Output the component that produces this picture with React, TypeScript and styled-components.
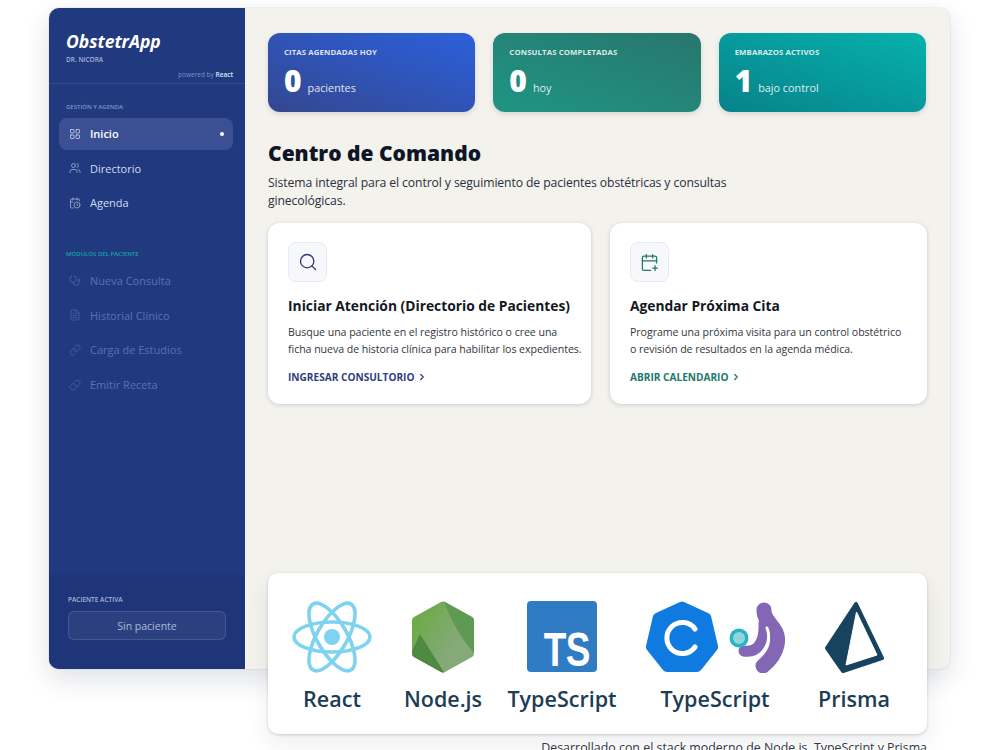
import React from 'react'
import styled, { createGlobalStyle } from 'styled-components'
import {
  CalendarClock,
  CalendarPlus,
  ChevronRight,
  FileText,
  LayoutGrid,
  Link,
  Pill,
  Search,
  Stethoscope,
  Users
} from 'lucide-react'

const GlobalStyle = createGlobalStyle`
  html, body {
    margin: 0;
    height: 100%;
    overflow: hidden;
    background: #fff;
  }
  body {
    font-family: "Open Sans", "Noto Sans", "Liberation Sans", sans-serif;
  }
`

const Page = styled.div`
  padding: 8px 50px 0 49px;
`

const Shell = styled.div`
  display: flex;
  height: 661px;
  border-radius: 10px;
  background: #f3f2ec;
  box-shadow: 0 10px 26px rgba(30, 40, 70, 0.14), 0 0 0 1px rgba(30, 40, 70, 0.05);
`

const Sidebar = styled.aside`
  width: 196px;
  flex: none;
  display: flex;
  flex-direction: column;
  border-radius: 10px 0 0 10px;
  background: #21397f;
  color: #fff;
`

const Brand = styled.div`
  padding: 21px 12px 4px 17px;
  border-bottom: 1px solid rgba(255, 255, 255, 0.09);
`

const Logo = styled.div`
  font-size: 17.5px;
  line-height: 24px;
  font-weight: 700;
  font-style: italic;
`

const Doctor = styled.div`
  margin-top: 2px;
  font-size: 6.5px;
  line-height: 9px;
  font-weight: 600;
  color: #a9b5d8;
`

const Powered = styled.div`
  margin-top: 6px;
  text-align: right;
  font-size: 6.5px;
  line-height: 9px;
  color: #7f8fc0;

  b {
    font-weight: 600;
    color: #dfe5f5;
  }
`

const NavGroup = styled.nav<{ $top: number }>`
  margin-top: ${p => p.$top}px;
  padding: 0 12px 0 10px;
  display: flex;
  flex-direction: column;
`

const GroupLabel = styled.div<{ $teal?: boolean }>`
  padding-left: 7px;
  margin-bottom: 6px;
  font-size: 6px;
  line-height: 9px;
  font-weight: 600;
  color: ${p => (p.$teal ? '#13a5ad' : '#8796c4')};
`

const NavItem = styled.div<{ $active?: boolean; $disabled?: boolean }>`
  height: 32px;
  margin-bottom: 2.7px;
  padding: 0 9px 1px 10px;
  box-sizing: border-box;
  display: flex;
  align-items: center;
  gap: 9px;
  border-radius: 8px;
  font-size: 11px;
  font-weight: ${p => (p.$active ? 600 : 500)};
  color: ${p => (p.$disabled ? '#5a71b6' : p.$active ? '#fff' : '#d3dbf0')};
  background: ${p => (p.$active ? '#3a5093' : 'transparent')};

  svg {
    flex: none;
    color: ${p => (p.$disabled ? '#4f65ac' : p.$active ? '#d3dbf0' : '#a9b5d8')};
  }
`

const ActiveDot = styled.span`
  width: 4px;
  height: 4px;
  margin-left: auto;
  border-radius: 50%;
  background: #fff;
`

const PatientBox = styled.div`
  margin-top: auto;
  height: 94px;
  box-sizing: border-box;
  padding: 20px 19px 0;
  border-radius: 0 0 0 10px;
  background: #1f3579;
`

const PatientLabel = styled.div`
  margin-bottom: 7px;
  font-size: 6.5px;
  line-height: 9px;
  font-weight: 600;
  color: #a9b5d8;
`

const PatientButton = styled.div`
  height: 29px;
  box-sizing: border-box;
  display: flex;
  align-items: center;
  justify-content: center;
  border: 1px solid rgba(255, 255, 255, 0.12);
  border-radius: 6px;
  background: rgba(255, 255, 255, 0.06);
  font-size: 10.5px;
  color: #aeb9da;
`

const Main = styled.main`
  flex: 1;
  min-width: 0;
  padding: 25px 23px 0;
  display: flex;
  flex-direction: column;
`

const StatRow = styled.div`
  display: grid;
  grid-template-columns: repeat(3, 1fr);
  gap: 18px;
  padding-right: 1px;
`

const StatCard = styled.div<{ $from: string; $to: string }>`
  height: 79px;
  box-sizing: border-box;
  padding: 13px 16px 0;
  border-radius: 12px;
  color: #fff;
  background: linear-gradient(20deg, ${p => p.$from}, ${p => p.$to});
  box-shadow: 0 2px 5px rgba(30, 40, 70, 0.14);
`

const StatLabel = styled.div`
  font-size: 7.8px;
  line-height: 13px;
  font-weight: 700;
  letter-spacing: 0.1px;
  color: rgba(255, 255, 255, 0.85);
`

const StatValue = styled.div`
  margin-top: 3px;
  display: flex;
  align-items: baseline;
  gap: 6px;
  font-size: 10.8px;
  color: rgba(255, 255, 255, 0.88);

  b {
    font-size: 30px;
    line-height: 38px;
    font-weight: 800;
    color: #fff;
  }
`

const Title = styled.h1`
  margin: 26px 0 0;
  font-size: 21px;
  line-height: 30px;
  font-weight: 800;
  color: #0d1526;
`

const Intro = styled.p`
  margin: 6px 0 0;
  width: 480px;
  font-size: 12.2px;
  line-height: 18px;
  letter-spacing: -0.1px;
  color: #2a3040;
`

const ActionRow = styled.div`
  margin-top: 13px;
  display: grid;
  grid-template-columns: 323px 317px;
  gap: 19px;
`

const ActionCard = styled.div`
  height: 181px;
  box-sizing: border-box;
  padding: 19px 14px 0 20px;
  border-radius: 12px;
  background: #fff;
  box-shadow: 0 1px 4px rgba(30, 40, 70, 0.18);
`

const IconBox = styled.div<{ $color: string }>`
  width: 39px;
  height: 40px;
  display: flex;
  align-items: center;
  justify-content: center;
  box-sizing: border-box;
  border: 1px solid #e7eaf1;
  border-radius: 8px;
  background: #f7f8fb;
  color: ${p => p.$color};
`

const ActionTitle = styled.h2`
  margin: 14px 0 0;
  font-size: 13.8px;
  line-height: 20px;
  font-weight: 700;
  color: #14181f;
`

const ActionText = styled.p`
  margin: 8px 0 0;
  font-size: 10.6px;
  line-height: 16.5px;
  letter-spacing: -0.05px;
  white-space: nowrap;
  color: #33363d;
`

const ActionLink = styled.div<{ $color: string }>`
  margin-top: 13px;
  display: flex;
  align-items: center;
  gap: 3px;
  font-size: 10.1px;
  line-height: 14px;
  font-weight: 700;
  color: ${p => p.$color};
`

const Footer = styled.div`
  margin-top: auto;
  margin-bottom: -87px;
`

const TechCard = styled.div`
  height: 161px;
  box-sizing: border-box;
  padding-top: 27px;
  display: grid;
  grid-template-columns: 128px 94px 144px 162px 116px;
  border-radius: 10px;
  background: #fff;
  box-shadow: 0 1px 3px rgba(30, 40, 70, 0.2), 0 10px 24px rgba(30, 40, 70, 0.08);
`

const TechItem = styled.div`
  display: flex;
  flex-direction: column;
  align-items: center;
`

const TechLogo = styled.div`
  height: 73px;
  display: flex;
  align-items: center;
  gap: 10px;
`

const TechName = styled.div`
  margin-top: 10px;
  font-size: 21.5px;
  line-height: 32px;
  font-weight: 600;
  color: #1d3d56;
`

const TsBadge = styled.div`
  width: 70px;
  height: 71px;
  box-sizing: border-box;
  padding: 0 7px 5px 0;
  display: flex;
  align-items: flex-end;
  justify-content: flex-end;
  border-radius: 4px;
  background: #2f7bc4;
  color: #fff;
  font-family: "Liberation Sans", sans-serif;
  font-size: 37px;
  line-height: 27px;
  font-weight: 700;
  letter-spacing: -0.5px;

  span {
    display: block;
    transform: scaleY(1.3);
    transform-origin: bottom;
  }
`

const Caption = styled.div`
  margin-top: 6px;
  text-align: right;
  font-size: 12.4px;
  line-height: 16px;
  color: #33363d;
`

const ReactLogo = () => (
  <svg width="82" height="72" viewBox="0 0 82 72" fill="none" stroke="#7dd3f0" strokeWidth="3.6">
    <ellipse cx="41" cy="36" rx="38" ry="15" />
    <ellipse cx="41" cy="36" rx="38" ry="15" transform="rotate(60 41 36)" />
    <ellipse cx="41" cy="36" rx="38" ry="15" transform="rotate(120 41 36)" />
    <circle cx="41" cy="36" r="8" fill="#7dd3f0" stroke="none" />
  </svg>
)

const NodeLogo = () => (
  <svg width="64" height="72" viewBox="0 0 64 72">
    <defs>
      <linearGradient id="nodeMid" x1="0" y1="0" x2="1" y2="0.7">
        <stop offset="0.1" stopColor="#6aab45" />
        <stop offset="0.75" stopColor="#86a978" />
      </linearGradient>
    </defs>
    <path d="M30 1a4 4 0 0 1 4 0L61 16a4 4 0 0 1 2 3v34a4 4 0 0 1-2 3L34 71a4 4 0 0 1-4 0L3 56a4 4 0 0 1-2-3V19a4 4 0 0 1 2-3Z" fill="url(#nodeMid)" />
    <path d="M9 33 1 50v3a4 4 0 0 0 2 3l27 15a4 4 0 0 0 3 .3Z" fill="#4f8a42" />
    <path d="M33 .6a4 4 0 0 1 1 .4L61 16a4 4 0 0 1 2 3v33C52 40 42 24 33 .6Z" fill="#5e9a52" />
  </svg>
)

const HelmLogo = () => (
  <svg width="74" height="72" viewBox="0 0 74 72" fill="none">
    <path d="M35 1a4 4 0 0 1 4 0L63 12a5 5 0 0 1 3 3l7 30a5 5 0 0 1-1 4L56 69a5 5 0 0 1-4 2H22a5 5 0 0 1-4-2L2 49a5 5 0 0 1-1-4L8 15a5 5 0 0 1 3-3Z" fill="#0f7be0" />
    <path d="M50 28A15.5 15.5 0 1 0 50 46" stroke="#fff" strokeWidth="5" strokeLinecap="round" />
  </svg>
)

const PurpleLogo = () => (
  <svg width="56" height="72" viewBox="0 0 56 72" fill="none" strokeLinecap="round">
    <path d="M35 9C34 22 52 26 48 44C46 54 40 60 34 65" stroke="#8467b4" strokeWidth="15" />
    <path d="M15 50C28 52 36 42 35 22" stroke="#8467b4" strokeWidth="11" />
    <path d="M38 27C42 37 38 48 28 57" stroke="#fff" strokeWidth="3" />
    <circle cx="10" cy="37" r="9.5" fill="#2bb2c4" />
    <circle cx="10" cy="37" r="6" fill="#8fd6da" />
  </svg>
)

const PrismaLogo = () => (
  <svg width="60" height="72" viewBox="0 0 60 72">
    <path d="M32 3 3 47 19 70 58 57Z" fill="#17435f" stroke="#17435f" strokeWidth="4" strokeLinejoin="round" />
    <path d="M32.5 11 22 64 53 54Z" fill="#fff" stroke="#fff" strokeWidth="1" strokeLinejoin="round" />
  </svg>
)

const mainNav = [
  { label: 'Inicio', icon: LayoutGrid, active: true },
  { label: 'Directorio', icon: Users },
  { label: 'Agenda', icon: CalendarClock }
]

const moduleNav = [
  { label: 'Nueva Consulta', icon: Stethoscope },
  { label: 'Historial Clínico', icon: FileText },
  { label: 'Carga de Estudios', icon: Link },
  { label: 'Emitir Receta', icon: Pill }
]

const stats = [
  { label: 'CITAS AGENDADAS HOY', value: '0', unit: 'pacientes', from: '#34478f', to: '#2b60dc' },
  { label: 'CONSULTAS COMPLETADAS', value: '0', unit: 'hoy', from: '#1f9584', to: '#28766d' },
  { label: 'EMBARAZOS ACTIVOS', value: '1', unit: 'bajo control', from: '#07828a', to: '#06b1ad' }
]

const App = () => {
  return (
    <Page>
      <GlobalStyle />
      <Shell>
        <Sidebar>
          <Brand>
            <Logo>ObstetrApp</Logo>
            <Doctor>DR. NICORA</Doctor>
            <Powered>
              powered by <b>React</b>
            </Powered>
          </Brand>
          <NavGroup $top={19}>
            <GroupLabel>GESTIÓN Y AGENDA</GroupLabel>
            {mainNav.map(item => (
              <NavItem key={item.label} $active={item.active}>
                <item.icon size={12} strokeWidth={1.5} />
                {item.label}
                {item.active && <ActiveDot />}
              </NavItem>
            ))}
          </NavGroup>
          <NavGroup $top={28}>
            <GroupLabel $teal>MÓDULOS DEL PACIENTE</GroupLabel>
            {moduleNav.map(item => (
              <NavItem key={item.label} $disabled>
                <item.icon size={12} strokeWidth={1.5} />
                {item.label}
              </NavItem>
            ))}
          </NavGroup>
          <PatientBox>
            <PatientLabel>PACIENTE ACTIVA</PatientLabel>
            <PatientButton>Sin paciente</PatientButton>
          </PatientBox>
        </Sidebar>
        <Main>
          <StatRow>
            {stats.map(stat => (
              <StatCard key={stat.label} $from={stat.from} $to={stat.to}>
                <StatLabel>{stat.label}</StatLabel>
                <StatValue>
                  <b>{stat.value}</b>
                  {stat.unit}
                </StatValue>
              </StatCard>
            ))}
          </StatRow>
          <Title>Centro de Comando</Title>
          <Intro>
            Sistema integral para el control y seguimiento de pacientes obstétricas y consultas ginecológicas.
          </Intro>
          <ActionRow>
            <ActionCard>
              <IconBox $color="#2a3a78">
                <Search size={20} strokeWidth={1.6} />
              </IconBox>
              <ActionTitle>Iniciar Atención (Directorio de Pacientes)</ActionTitle>
              <ActionText>
                Busque una paciente en el registro histórico o cree una
                <br />
                ficha nueva de historia clínica para habilitar los expedientes.
              </ActionText>
              <ActionLink $color="#2f3f7e">
                INGRESAR CONSULTORIO <ChevronRight size={10} strokeWidth={3} />
              </ActionLink>
            </ActionCard>
            <ActionCard>
              <IconBox $color="#23786c">
                <CalendarPlus size={19} strokeWidth={1.6} />
              </IconBox>
              <ActionTitle>Agendar Próxima Cita</ActionTitle>
              <ActionText>
                Programe una próxima visita para un control obstétrico
                <br />o revisión de resultados en la agenda médica.
              </ActionText>
              <ActionLink $color="#23786c">
                ABRIR CALENDARIO <ChevronRight size={10} strokeWidth={3} />
              </ActionLink>
            </ActionCard>
          </ActionRow>
          <Footer>
            <TechCard>
              <TechItem>
                <TechLogo>
                  <ReactLogo />
                </TechLogo>
                <TechName>React</TechName>
              </TechItem>
              <TechItem>
                <TechLogo>
                  <NodeLogo />
                </TechLogo>
                <TechName>Node.js</TechName>
              </TechItem>
              <TechItem>
                <TechLogo>
                  <TsBadge>
                    <span>TS</span>
                  </TsBadge>
                </TechLogo>
                <TechName>TypeScript</TechName>
              </TechItem>
              <TechItem>
                <TechLogo>
                  <HelmLogo />
                  <PurpleLogo />
                </TechLogo>
                <TechName>TypeScript</TechName>
              </TechItem>
              <TechItem>
                <TechLogo>
                  <PrismaLogo />
                </TechLogo>
                <TechName>Prisma</TechName>
              </TechItem>
            </TechCard>
            <Caption>Desarrollado con el stack moderno de Node.js, TypeScript y Prisma</Caption>
          </Footer>
        </Main>
      </Shell>
    </Page>
  )
}

export default App
